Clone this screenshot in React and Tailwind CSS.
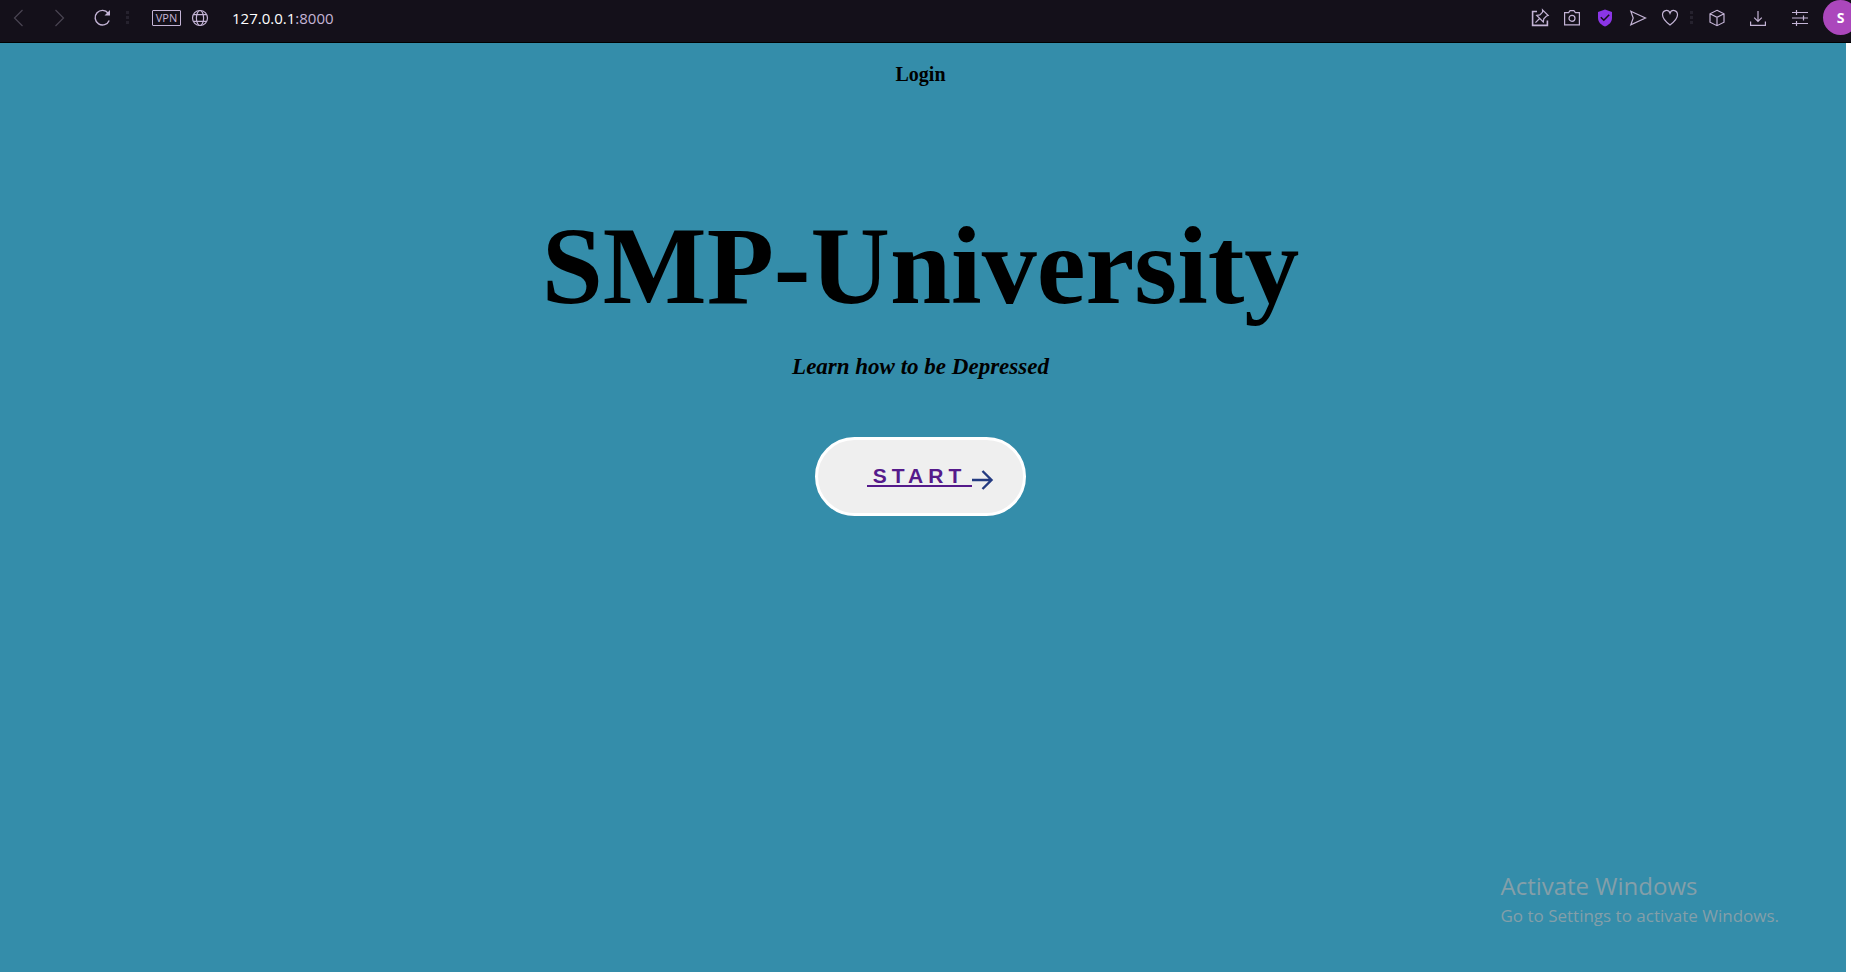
import React from "react";

function Icon({ children, className = "size-5", box = 20, width = 1.2 }) {
  return (
    <svg
      viewBox={`0 0 ${box} ${box}`}
      className={className}
      fill="none"
      stroke="currentColor"
      strokeWidth={width}
      aria-hidden="true"
    >
      {children}
    </svg>
  );
}

function BarButton({ label, className = "", children }) {
  return (
    <button type="button" aria-label={label} className={`flex shrink-0 ${className}`}>
      {children}
    </button>
  );
}

function Dots() {
  return (
    <span className="flex shrink-0 flex-col gap-[2px]" aria-hidden="true">
      <span className="size-[3px] bg-[#26222e]" />
      <span className="size-[3px] bg-[#26222e]" />
      <span className="size-[3px] bg-[#26222e]" />
    </span>
  );
}

function BrowserBar() {
  return (
    <header className="flex h-[43px] shrink-0 items-start overflow-hidden border-b border-black bg-[#14101a] font-['Open_Sans','Noto_Sans',sans-serif] text-[#c4b4d6]">
      <div className="flex h-[35px] items-center pl-2">
        <BarButton label="Back" className="mr-5 text-[#4a4552]">
          <Icon><path d="M14.5 2 6.5 10l8 8" /></Icon>
        </BarButton>
        <BarButton label="Forward" className="mr-6 text-[#4a4552]">
          <Icon><path d="M7.500 2l8 8-8 8" /></Icon>
        </BarButton>
        <BarButton label="Reload" className="mr-[14px]">
          <Icon width={1.4}>
            <path d="M16.200 5.200A7.300 7.300 0 1 0 17.200 12.500" />
            <path d="M18 2v5.500h-5.500z" fill="currentColor" stroke="none" />
          </Icon>
        </BarButton>
        <Dots />
        <button
          type="button"
          className="ml-[23px] flex h-4 w-[29px] items-center justify-center rounded-[1px] border border-current text-[11px] leading-none"
        >
          VPN
        </button>
        <BarButton label="Site information" className="ml-[9px]">
          <Icon>
            <circle cx="10" cy="10" r="7.500" />
            <ellipse cx="10" cy="10" rx="3.600" ry="7.500" />
            <path d="M3.500 6.700h13M3.500 13.300h13" />
          </Icon>
        </BarButton>
        <a href="#home" className="ml-[22px] text-[15px] leading-5">
          <span className="text-white">127.0.0.1</span>:8000
        </a>
      </div>
      <div className="ml-auto flex h-[35px] items-center">
        <BarButton label="Pin page" className="mr-3">
          <Icon>
            <path d="M7 3.500H2.600v13.900h14.800V12.500" strokeWidth="1.600" />
            <path d="M12.500 1.800l5.700 5.700-1.700.5-2.700 2.800-.5 3.200L6.700 7.400l3.200-.5 2.700-2.800zM9.600 10.500 5.500 14.600" />
          </Icon>
        </BarButton>
        <BarButton label="Snapshot" className="mr-[13px]">
          <Icon>
            <path d="M2.600 4.600h4l1.500-2h3.800l1.500 2h4v12.300H2.600z" />
            <circle cx="10" cy="10.300" r="3" />
          </Icon>
        </BarButton>
        <BarButton label="Ad blocker" className="mr-[13px] text-[#8b35e6]">
          <Icon>
            <path d="M10 1.500 17 4v6c0 4.500-3.500 7-7 8.500C6.500 17 3 14.500 3 10V4z" fill="currentColor" stroke="none" />
            <path d="M5.800 9.200l3 3 5.400-5.400" stroke="#14101a" strokeWidth="1.600" />
          </Icon>
        </BarButton>
        <BarButton label="Send to device" className="mr-3">
          <Icon><path d="M2.800 3.200 17.500 10 2.800 16.800 5.200 10z" /></Icon>
        </BarButton>
        <BarButton label="Add to favourites" className="mr-[10px]">
          <Icon>
            <path d="M10 17C6 14 2.500 10.500 2.500 6.800 2.500 1.800 8.500 1 10 5.200 11.500 1 17.500 1.800 17.500 6.800 17.500 10.500 14 14 10 17z" />
          </Icon>
        </BarButton>
        <Dots />
        <BarButton label="Workspaces" className="ml-[14px] mr-[21px]">
          <Icon>
            <path d="M10 2.300l7 3.500v8.400l-7 3.500-7-3.500V5.800zM3 5.800l7 3.500 7-3.500M10 9.300v8.400" />
          </Icon>
        </BarButton>
        <BarButton label="Downloads" className="mr-[22px]">
          <Icon><path d="M10 3v10.500M6.200 9.700l3.800 3.800 3.800-3.800M2.600 13.500v3.900h14.800v-3.900" /></Icon>
        </BarButton>
        <BarButton label="Easy setup" className="mr-[13px]">
          <Icon><path d="M2 4.500h16M2 10h16M2 15.500h16M6.500 2v5M13.500 7.500v5M6.500 13v5" /></Icon>
        </BarButton>
        <button
          type="button"
          aria-label="Profile"
          className="-mr-[7px] flex size-[35px] shrink-0 items-center justify-center rounded-full bg-[#ab47bc] text-sm font-bold text-white"
        >
          S
        </button>
      </div>
    </header>
  );
}

function ActivationNotice() {
  return (
    <aside className="absolute bottom-[42px] right-[72px] font-['Open_Sans','Noto_Sans',sans-serif] text-[#849fa9]">
      <p className="text-2xl leading-8">Activate Windows</p>
      <p className="text-[17px] leading-7">Go to Settings to activate Windows.</p>
    </aside>
  );
}

export default function App() {
  return (
    <div className="flex min-h-screen flex-col">
      <BrowserBar />
      <div className="flex grow border-r-[5px] border-white bg-[#348daa]">
        <main className="flex grow flex-col items-center pr-[5px] pt-[19px] text-center font-['Liberation_Serif',serif] font-bold text-black">
          <nav>
            <a href="#login" className="block text-xl leading-6">Login</a>
          </nav>
          <h1 className="mt-[117px] text-[110px] leading-[126px]">SMP-University</h1>
          <p className="mt-6 text-[23px] italic leading-7">Learn how to be Depressed</p>
          <a
            href="#start"
            className="mt-14 flex h-[79px] w-[211px] items-center justify-center rounded-full border-[3px] border-white bg-[#efefef] pl-5 font-['Liberation_Sans',sans-serif] text-[21px] leading-[19px] tracking-[5px] text-[#551a8b]"
          >
            <span className="border-b-2 border-current px-[6px]">START</span>
            <svg viewBox="0 0 22 22" className="mt-[6px] size-[22px]" fill="none" stroke="#233a80" strokeWidth="2.400" aria-hidden="true">
              <path d="M0 11h19M10.500 2l9 9-9 9" />
            </svg>
          </a>
        </main>
      </div>
      <ActivationNotice />
    </div>
  );
}
